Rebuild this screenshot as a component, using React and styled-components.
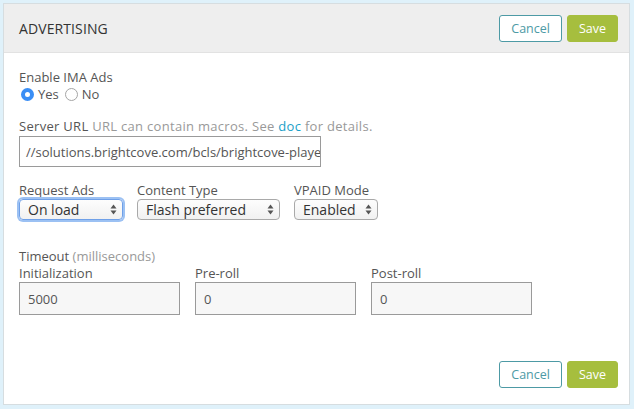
import React from 'react';
import styled, { createGlobalStyle } from 'styled-components';

const Global = createGlobalStyle`
  html, body {
    margin: 0;
    padding: 0;
    background: #dff1fa;
  }
  body {
    font-family: "Open Sans", Lato, sans-serif;
    color: #555;
  }
`;

const Page = styled.div`
  padding: 3px 4px 4px 3px;
  height: 409px;
  box-sizing: border-box;
`;

const Panel = styled.section`
  background: #fff;
  border: 1px solid #d6dde0;
  height: 100%;
  box-sizing: border-box;
  display: flex;
  flex-direction: column;
`;

const Header = styled.header`
  display: flex;
  align-items: center;
  justify-content: space-between;
  height: 48px;
  padding: 0 11px 0 15px;
  background: #eeeeee;
  border-bottom: 1px solid #e2e2e2;
`;

const Title = styled.h2`
  margin: 0;
  font-size: 14px;
  font-weight: 400;
  color: #333;
  letter-spacing: 0.1px;
`;

const Actions = styled.div`
  display: flex;
  gap: 5px;
`;

const Button = styled.button`
  height: 27px;
  padding: 0 11px;
  font-family: inherit;
  font-size: 12.5px;
  border-radius: 3px;
  border: 1px solid ${(p) => (p.$primary ? '#a6be3e' : '#4d9aa5')};
  background: ${(p) => (p.$primary ? '#a6be3e' : '#fff')};
  color: ${(p) => (p.$primary ? '#fff' : '#4d9aa5')};
  cursor: pointer;
`;

const Body = styled.div`
  flex: 1;
  padding: 16px 15px 0;
  display: flex;
  flex-direction: column;
`;

const Group = styled.div`
  margin-bottom: ${(p) => p.$mb || 0}px;
`;

const Label = styled.div`
  font-size: 13px;
  line-height: 16px;
  color: #555;
  white-space: nowrap;
  letter-spacing: ${(p) => p.$spacing || 0}px;
`;

const Hint = styled.span`
  color: #999;
`;

const Link = styled.a`
  color: #1aa0c8;
  text-decoration: none;
`;

const RadioRow = styled.div`
  display: flex;
  align-items: center;
  gap: 6px;
  margin: 2px 0 0 2px;
`;

const RadioOption = styled.label`
  display: flex;
  align-items: center;
  gap: 4px;
  font-size: 13px;
  line-height: 15px;
  color: #555;
`;

const Radio = styled.span`
  width: 13px;
  height: 13px;
  border-radius: 50%;
  box-sizing: border-box;
  border: ${(p) => (p.$checked ? '4.5px solid #3a8ef5' : '1px solid #a5a5a5')};
  background: #fff;
`;

const TextInput = styled.div`
  margin-top: ${(p) => p.$mt}px;
  height: ${(p) => p.$h}px;
  box-sizing: border-box;
  border: 1px solid #9a9a9a;
  background: ${(p) => (p.$muted ? '#f7f7f7' : '#fff')};
  width: ${(p) => p.$w}px;
  padding: 0 ${(p) => p.$pad}px;
  display: flex;
  align-items: center;
  font-size: 13px;
  color: #555;
  white-space: nowrap;
  overflow: hidden;
`;

const SelectRow = styled.div`
  display: flex;
  gap: 14px;
`;

const SelectField = styled.div`
  display: flex;
  flex-direction: column;
`;

const Select = styled.div`
  margin-top: 1px;
  height: 21px;
  box-sizing: border-box;
  width: ${(p) => p.$w}px;
  border: 1px solid ${(p) => (p.$focus ? '#6fa0e8' : '#a9a9a9')};
  box-shadow: ${(p) => (p.$focus ? '0 0 0 2px #9cc1f3' : 'none')};
  border-radius: 4px;
  background: linear-gradient(#fdfdfd, #f1f1f1);
  display: flex;
  align-items: center;
  justify-content: space-between;
  padding: 0 5px 0 8px;
  font-size: 14px;
  color: #333;
`;

const Arrows = () => (
  <svg width="7" height="11" viewBox="0 0 7 11">
    <path d="M3.5 0.5 L6.5 4.5 H0.5 Z" fill="#555" />
    <path d="M3.5 10.5 L6.5 6.5 H0.5 Z" fill="#555" />
  </svg>
);

const TimeoutRow = styled.div`
  display: flex;
  gap: 15px;
  margin-top: 1px;
`;

const Footer = styled.footer`
  margin-top: auto;
  display: flex;
  justify-content: flex-end;
  padding: 0 11px 16px 0;
`;

const selects = [
  { label: 'Request Ads', value: 'On load', w: 104, focus: true },
  { label: 'Content Type', value: 'Flash preferred', w: 143 },
  { label: 'VPAID Mode', value: 'Enabled', w: 84 },
];

const timeouts = [
  { label: 'Initialization', value: '5000' },
  { label: 'Pre-roll', value: '0' },
  { label: 'Post-roll', value: '0' },
];

const ButtonPair = () => (
  <Actions>
    <Button>Cancel</Button>
    <Button $primary>Save</Button>
  </Actions>
);

export default function App() {
  return (
    <Page>
      <Global />
      <Panel>
        <Header>
          <Title>ADVERTISING</Title>
          <ButtonPair />
        </Header>
        <Body>
          <Group $mb={16}>
            <Label>Enable IMA Ads</Label>
            <RadioRow>
              <RadioOption>
                <Radio $checked />
                Yes
              </RadioOption>
              <RadioOption>
                <Radio />
                No
              </RadioOption>
            </RadioRow>
          </Group>
          <Group $mb={15}>
            <Label $spacing={0.3}>
              Server URL <Hint>URL can contain macros. See <Link href="#">doc</Link> for details.</Hint>
            </Label>
            <TextInput $w={302} $h={31} $mt={2} $pad={6}>
              //solutions.brightcove.com/bcls/brightcove-player
            </TextInput>
          </Group>
          <Group $mb={28}>
            <SelectRow>
              {selects.map((s) => (
                <SelectField key={s.label}>
                  <Label>{s.label}</Label>
                  <Select $w={s.w} $focus={s.focus}>
                    {s.value}
                    <Arrows />
                  </Select>
                </SelectField>
              ))}
            </SelectRow>
          </Group>
          <Group>
            <Label>
              Timeout <Hint>(milliseconds)</Hint>
            </Label>
            <TimeoutRow>
              {timeouts.map((t) => (
                <div key={t.label}>
                  <Label>{t.label}</Label>
                  <TextInput $w={161} $h={33} $mt={1} $pad={8} $muted>
                    {t.value}
                  </TextInput>
                </div>
              ))}
            </TimeoutRow>
          </Group>
        </Body>
        <Footer>
          <ButtonPair />
        </Footer>
      </Panel>
    </Page>
  );
}
